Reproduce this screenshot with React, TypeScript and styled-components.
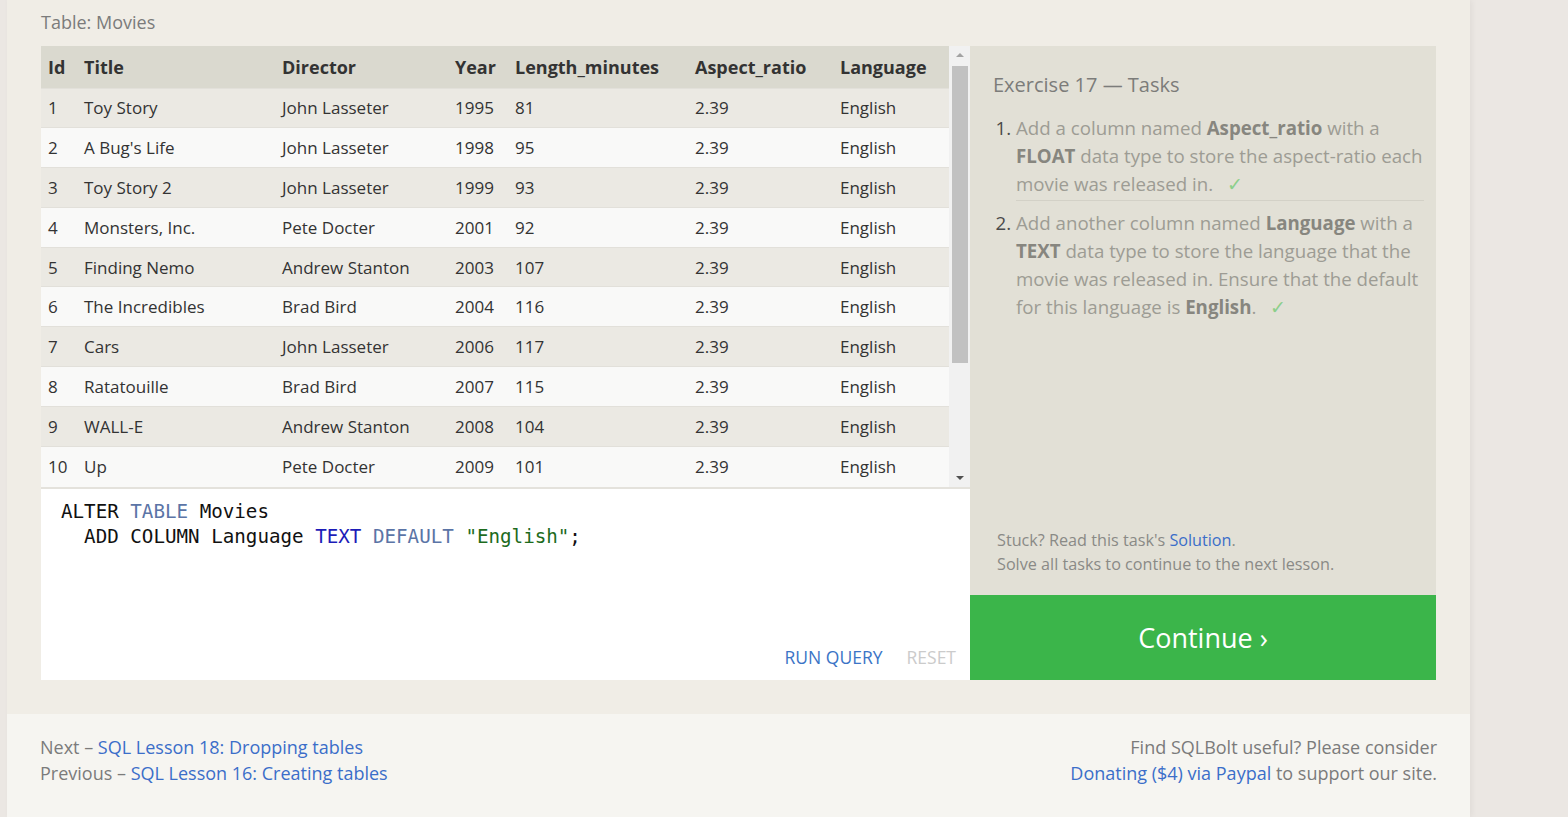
import styled, { createGlobalStyle } from "styled-components";

const GlobalStyle = createGlobalStyle`
  html, body {
    margin: 0;
    padding: 0;
    background: #ebe7e3;
    font-family: "Open Sans", "Noto Sans", sans-serif;
  }
  * {
    box-sizing: border-box;
  }
`;

const Page = styled.div`
  width: 1463px;
  margin-left: 7px;
  min-height: 817px;
  display: flex;
  flex-direction: column;
  background: #f6f5f1;
  box-shadow: 2px 0 6px rgba(0, 0, 0, 0.05);
`;

const Lesson = styled.section`
  background: #f0ede6;
  padding: 8px 34px 34px;
`;

const Caption = styled.div`
  font-size: 18px;
  line-height: 28px;
  color: #7b7b7b;
  margin-bottom: 10px;
`;

const Workspace = styled.div`
  display: flex;
`;

const LeftColumn = styled.div`
  width: 929px;
  display: flex;
  flex-direction: column;
`;

const TableFrame = styled.div`
  height: 443px;
  display: flex;
  background: #f9f9f8;
  border-bottom: 2px solid #e4e2dc;
`;

const DataTable = styled.table`
  width: 908px;
  border-collapse: collapse;
  table-layout: fixed;
  font-size: 17px;
  color: #333;
  align-self: flex-start;
`;

const HeadCell = styled.th<{ $w: number }>`
  width: ${(p) => p.$w}px;
  height: 42px;
  padding: 0 7px;
  text-align: left;
  font-weight: 700;
  font-size: 18px;
  background: #dad9cf;
  white-space: nowrap;
`;

const Row = styled.tr<{ $odd: boolean }>`
  background: ${(p) => (p.$odd ? "#ebe9e3" : "#f9f9f8")};
  border-top: 1px solid #e2e0da;
`;

const Cell = styled.td`
  height: 39.8px;
  padding: 0 7px;
  white-space: nowrap;
`;

const ScrollBar = styled.div`
  width: 21px;
  background: #f1f1f1;
  display: flex;
  flex-direction: column;
  align-items: center;
`;

const ScrollArrow = styled.div<{ $down?: boolean }>`
  height: 18px;
  width: 100%;
  display: flex;
  align-items: center;
  justify-content: center;
  &::after {
    content: "";
    border-left: 4px solid transparent;
    border-right: 4px solid transparent;
    ${(p) =>
      p.$down
        ? "border-top: 4px solid #505050;"
        : "border-bottom: 4px solid #a3a3a3;"}
  }
`;

const ScrollThumb = styled.div`
  width: 16px;
  height: 297px;
  margin-top: 2px;
  background: #c1c1c1;
`;

const ScrollFill = styled.div`
  flex: 1;
`;

const Editor = styled.div`
  height: 191px;
  background: #fff;
  display: flex;
  flex-direction: column;
  justify-content: space-between;
  padding: 10px 14px 11px 20px;
`;

const Code = styled.pre`
  margin: 0;
  font-family: "DejaVu Sans Mono", "Liberation Mono", monospace;
  font-size: 19.2px;
  line-height: 25px;
  color: #111;
`;

const Kw = styled.span<{ $tone: "soft" | "strong" | "str" }>`
  color: ${(p) =>
    p.$tone === "soft" ? "#5b74a6" : p.$tone === "strong" ? "#1c1cb8" : "#1d6b1d"};
`;

const EditorActions = styled.div`
  display: flex;
  justify-content: flex-end;
  gap: 24px;
`;

const ActionLink = styled.span<{ $muted?: boolean }>`
  font-size: 17.5px;
  line-height: 24px;
  color: ${(p) => (p.$muted ? "#cbcbcb" : "#3b74c6")};
`;

const TasksColumn = styled.div`
  width: 466px;
  display: flex;
  flex-direction: column;
`;

const TasksPanel = styled.div`
  flex: 1;
  background: #e2e0d6;
  display: flex;
  flex-direction: column;
  justify-content: space-between;
  padding: 24px 8px 19px 23px;
`;

const TasksTitle = styled.h3`
  margin: 0 0 14px;
  font-size: 20px;
  font-weight: 400;
  line-height: 30px;
  color: #7c7c7a;
`;

const TaskList = styled.ol`
  margin: 0;
  padding: 0 0 0 23px;
  color: #4a4a4a;
`;

const Task = styled.li`
  font-size: 18.7px;
  line-height: 28px;
  padding-bottom: 2px;
  margin-right: 4px;
  & + & {
    border-top: 1px solid #d3d1c7;
    padding-top: 8px;
  }
`;

const TaskText = styled.span`
  color: #9d9c94;
  b {
    color: #87867f;
    font-weight: 700;
  }
`;

const Check = styled.span`
  color: #8ccf8a;
  margin-left: 14px;
`;

const Note = styled.p`
  margin: 0 0 0 4px;
  font-size: 16.2px;
  line-height: 24px;
  color: #8a8a86;
`;

const Link = styled.a`
  color: #3b6ec9;
  text-decoration: none;
`;

const ContinueButton = styled.button`
  height: 85px;
  border: none;
  background: #3bb54a;
  color: #fff;
  font-family: inherit;
  font-size: 27px;
  cursor: pointer;
`;

const Footer = styled.footer`
  flex: 1;
  display: flex;
  justify-content: space-between;
  padding: 20px 33px 20px 33px;
  font-size: 18px;
  line-height: 26px;
  color: #7b7b7b;
`;

const FooterBlock = styled.div<{ $right?: boolean }>`
  text-align: ${(p) => (p.$right ? "right" : "left")};
`;

const columns: [string, number][] = [
  ["Id", 36],
  ["Title", 198],
  ["Director", 173],
  ["Year", 60],
  ["Length_minutes", 180],
  ["Aspect_ratio", 145],
  ["Language", 116],
];

const movies: [number, string, string, number, number][] = [
  [1, "Toy Story", "John Lasseter", 1995, 81],
  [2, "A Bug's Life", "John Lasseter", 1998, 95],
  [3, "Toy Story 2", "John Lasseter", 1999, 93],
  [4, "Monsters, Inc.", "Pete Docter", 2001, 92],
  [5, "Finding Nemo", "Andrew Stanton", 2003, 107],
  [6, "The Incredibles", "Brad Bird", 2004, 116],
  [7, "Cars", "John Lasseter", 2006, 117],
  [8, "Ratatouille", "Brad Bird", 2007, 115],
  [9, "WALL-E", "Andrew Stanton", 2008, 104],
  [10, "Up", "Pete Docter", 2009, 101],
];

function MoviesTable() {
  return (
    <TableFrame>
      <DataTable>
        <thead>
          <tr>
            {columns.map(([name, w]) => (
              <HeadCell key={name} $w={w}>
                {name}
              </HeadCell>
            ))}
          </tr>
        </thead>
        <tbody>
          {movies.map(([id, title, director, year, length], i) => (
            <Row key={id} $odd={i % 2 === 0}>
              <Cell>{id}</Cell>
              <Cell>{title}</Cell>
              <Cell>{director}</Cell>
              <Cell>{year}</Cell>
              <Cell>{length}</Cell>
              <Cell>2.39</Cell>
              <Cell>English</Cell>
            </Row>
          ))}
        </tbody>
      </DataTable>
      <ScrollBar>
        <ScrollArrow />
        <ScrollThumb />
        <ScrollFill />
        <ScrollArrow $down />
      </ScrollBar>
    </TableFrame>
  );
}

function QueryEditor() {
  return (
    <Editor>
      <Code>
        {"ALTER "}
        <Kw $tone="soft">TABLE</Kw>
        {" Movies\n  ADD COLUMN Language "}
        <Kw $tone="strong">TEXT</Kw> <Kw $tone="soft">DEFAULT</Kw>{" "}
        <Kw $tone="str">"English"</Kw>;
      </Code>
      <EditorActions>
        <ActionLink>RUN QUERY</ActionLink>
        <ActionLink $muted>RESET</ActionLink>
      </EditorActions>
    </Editor>
  );
}

function Tasks() {
  return (
    <TasksColumn>
      <TasksPanel>
        <div>
          <TasksTitle>Exercise 17 — Tasks</TasksTitle>
          <TaskList>
            <Task>
              <TaskText>
                Add a column named <b>Aspect_ratio</b> with a <b>FLOAT</b> data
                type to store the aspect-ratio each movie was released in.
              </TaskText>
              <Check>✓</Check>
            </Task>
            <Task>
              <TaskText>
                Add another column named <b>Language</b> with a <b>TEXT</b> data
                type to store the language that the movie was released in.
                Ensure that the default for this language is <b>English</b>.
              </TaskText>
              <Check>✓</Check>
            </Task>
          </TaskList>
        </div>
        <Note>
          Stuck? Read this task's <Link href="#">Solution</Link>.
          <br />
          Solve all tasks to continue to the next lesson.
        </Note>
      </TasksPanel>
      <ContinueButton>Continue ›</ContinueButton>
    </TasksColumn>
  );
}

export default function App() {
  return (
    <>
      <GlobalStyle />
      <Page>
        <Lesson>
          <Caption>Table: Movies</Caption>
          <Workspace>
            <LeftColumn>
              <MoviesTable />
              <QueryEditor />
            </LeftColumn>
            <Tasks />
          </Workspace>
        </Lesson>
        <Footer>
          <FooterBlock>
            Next – <Link href="#">SQL Lesson 18: Dropping tables</Link>
            <br />
            Previous – <Link href="#">SQL Lesson 16: Creating tables</Link>
          </FooterBlock>
          <FooterBlock $right>
            Find SQLBolt useful? Please consider
            <br />
            <Link href="#">Donating ($4) via Paypal</Link> to support our site.
          </FooterBlock>
        </Footer>
      </Page>
    </>
  );
}
